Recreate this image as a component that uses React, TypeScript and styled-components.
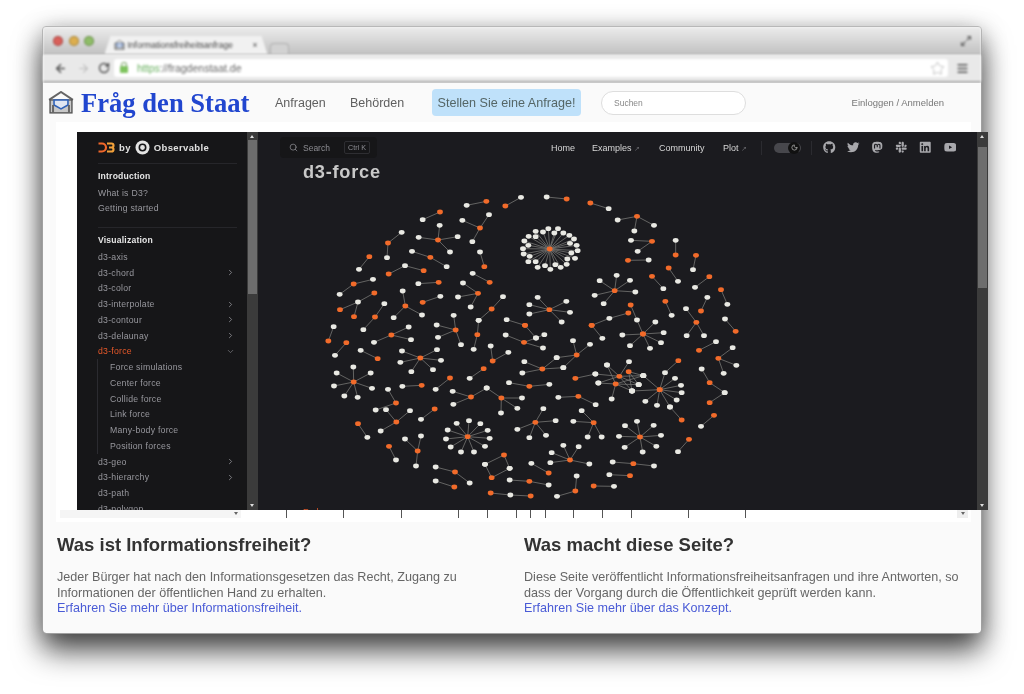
import React from "react";
import styled, {createGlobalStyle} from "styled-components";
import {ArrowLeft, ArrowRight, ChevronDown, ChevronRight, Maximize2, Menu, Moon, RotateCw, Search, Star} from "lucide-react";
import {FaGithub, FaLinkedin, FaMastodon, FaSlack, FaTwitter, FaYoutube} from "react-icons/fa";

const GlobalStyle = createGlobalStyle`
  html {
    background: #fff;
  }
  body {
    margin: 0;
    font-family: "Liberation Sans", Arial, sans-serif;
  }
  #root {
    height: 694px;
    overflow: hidden;
    display: flow-root;
  }
`;

// node: [x, y] is a white one, [x, y, O] an orange one
const O = 1;
type Node = [number, number, number?];
type Star = Node[]; // first node is the hub, the rest link to it
type Section = {x: number; y: number; stars: Star[]};

// positions measured on 3x crops of the chart, x/y is where each crop starts
const sections: Section[] = [
    {x: 320, y: 180, stars: [
        [[499,64,O],[440,76]],
        [[556,78,O],[603,52]],
        [[360,96,O],[308,119]],
        [[480,144,O],[427,121],[507,104],[457,185]],
        [[354,180,O],[359,136],[296,172],[413,170],[390,216]],
        [[204,189,O],[245,157],[201,233]],
        [[148,230,O],[117,268]],
        [[331,232,O],[276,214],[380,260]],
        [[255,257],[206,282,O],[311,272,O]],
        [[493,260,O],[480,216]],
        [[509,307,O],[458,280]],
        [[356,307,O],[295,311]],
        [[474,340,O],[429,309],[414,351],[452,381]],
        [[308,367,O],[361,349]],
        [[101,312,O],[59,343],[159,298]],
        [[114,366],[163,339,O],[60,389,O],[102,410,O]],
        [[165,411,O],[193,371],[130,449]],
        [[256,378,O],[248,333],[221,413],[306,405]],
        [[515,387,O],[549,350],[476,421]],
        [[472,464,O],[476,421],[461,508]],
        [[407,450,O],[401,406],[350,435],[354,472],[423,494]],
        [[214,465,O],[266,441],[273,479],[162,487]],
        [[25,483,O],[41,440]],
        [[560,419],[615,436,O]],
        [[612,487,O],[557,465],[648,474],[669,504]],
        [[648,474],[615,436,O],[673,464]],
    ]},
    {x: 530, y: 180, stars: [
        [[59,207,O],[17,154],[55,146],[84,146],[39,156],[73,159],[100,159],[118,166],[17,170],[132,177],[120,190],[140,196],[143,212],[124,219],[112,237],[135,235],[76,254],[110,253],[45,257],[92,262],[61,268],[23,262],[17,245],[-4,169],[-17,183],[-5,196],[-21,206],[-19,222],[-1,229],[-5,245]],
        [[110,57,O],[50,51]],
        [[181,69,O],[236,86]],
        [[321,109,O],[263,120],[372,136],[313,153]],
        [[366,184,O],[303,181],[323,214]],
        [[437,225,O],[437,181]],
        [[294,241,O],[356,240]],
        [[498,226,O],[489,269]],
        [[416,264,O],[444,304]],
        [[366,289,O],[400,326]],
        [[538,290,O],[495,322]],
        [[573,329,O],[592,373]],
        [[254,332,O],[260,286],[209,302],[300,301],[194,346],[316,336],[221,371]],
        [[58,389,O],[23,352],[109,364],[120,397],[95,426],[-2,374],[-2,402]],
        [[406,364,O],[425,406]],
        [[513,393,O],[532,352]],
        [[499,427,O],[468,386],[470,467],[522,467]],
        [[617,454,O],[585,417]],
        [[321,420],[302,375,O],[339,462,O]],
        [[238,415],[295,399,O],[185,436,O]],
        [[185,436,O],[217,475]],
        [[339,462,O],[376,426],[277,465],[401,458],[393,488],[300,497],[360,505]],
    ]},
    {x: 320, y: 340, stars: [
        [[79,8,O],[45,46]],
        [[173,56,O],[122,31]],
        [[301,54,O],[246,33],[351,29],[241,67],[363,61],[274,95],[339,89]],
        [[518,63,O],[512,18],[565,37]],
        [[491,86,O],[449,115]],
        [[101,126,O],[100,81],[50,99],[152,99],[42,138],[156,145],[73,168],[113,172]],
        [[305,136,O],[247,139]],
        [[228,189,O],[204,148],[167,210]],
        [[390,114,O],[347,148]],
        [[453,171,O],[398,154],[400,193],[500,144]],
        [[544,174,O],[500,144],[606,174],[592,205],[543,219]],
        [[229,246,O],[198,209],[270,212],[182,273]],
        [[344,207,O],[303,238]],
        [[114,251,O],[142,292]],
        [[443,290,O],[447,242],[410,250],[481,251],[383,270],[503,271],[378,297],[509,295],[392,321],[495,319],[423,336],[462,336]],
        [[207,319,O],[228,360]],
        [[293,333,O],[255,297],[303,288],[288,378]],
        [[405,396,O],[347,381],[449,429]],
        [[403,441,O],[347,423]],
        [[552,345,O],[495,373],[569,385]],
        [[515,413,O],[495,373],[569,385]],
        [[571,465],[512,459,O],[632,468,O]],
        [[628,424,O],[569,420],[686,435]],
        [[628,139,O],[567,128],[688,133]],
        [[686,399,O],[634,370]],
    ]},
    {x: 530, y: 340, stars: [
        [[140,45,O],[129,2],[180,13],[80,53],[100,83]],
        [[37,87,O],[80,53],[100,83],[-23,99],[-17,65]],
        [[507,31,O],[558,5]],
        [[565,55,O],[608,23],[619,76],[581,100]],
        [[405,98],[445,62,O],[389,149,O]],
        [[389,149,O],[435,115],[453,136],[455,158],[440,180],[420,201],[381,196],[346,184],[306,153],[340,107]],
        [[455,240,O],[420,201]],
        [[268,109,O],[231,75],[297,65],[340,107],[205,129],[326,134],[306,153],[196,102]],
        [[296,95,O],[340,107],[326,134],[306,153]],
        [[257,132,O],[340,107],[205,129],[231,75],[306,153],[245,177],[326,134]],
        [[136,115,O],[196,102]],
        [[145,169,O],[85,172],[197,194]],
        [[539,128,O],[515,87],[584,158]],
        [[539,188,O],[584,158]],
        [[552,226,O],[513,259]],
        [[477,298,O],[444,335]],
        [[191,248,O],[155,212],[130,244],[173,291],[215,291]],
        [[16,247,O],[40,206],[77,242],[-2,293],[48,286],[-38,268]],
        [[330,291,O],[321,244],[285,257],[371,256],[267,289],[393,286],[284,322],[379,319],[338,336]],
        [[120,360,O],[100,316],[146,320],[65,338],[61,368],[178,372]],
        [[310,371,O],[248,366],[372,378]],
        [[300,407,O],[238,404]],
        [[191,438,O],[252,439]],
        [[136,453,O],[140,408],[81,469]],
    ]},
];

const ForceGraph = () => {
    const links: React.ReactNode[] = [];
    const nodes: React.ReactNode[] = [];
    sections.forEach((section, s) => {
        const px = (n: Node) => n[0] / 3 + section.x;
        const py = (n: Node) => n[1] / 3 + section.y;
        section.stars.forEach((star, i) => {
            const hub = star[0];
            star.slice(1).forEach((leaf, j) => {
                links.push(<line key={`${s}-${i}-${j}`} x1={px(hub)} y1={py(hub)} x2={px(leaf)} y2={py(leaf)} stroke="#767674" strokeWidth={0.8}/>);
            });
            star.forEach((n, j) => {
                nodes.push(<ellipse key={`${s}-${i}-${j}`} cx={px(n)} cy={py(n)} rx={2.9} ry={2.4} fill={n[2] ? "#f26b2a" : "#e9e9e3"}/>);
            });
        });
    });
    return (
        <GraphSvg viewBox="258 183 719 327" width={719} height={327}>
            {links}
            {nodes}
            <text x={303} y={515} fill="#d8582a" fontSize={9} fontFamily="Liberation Sans">Fork</text>
        </GraphSvg>
    );
};

const HouseLogo = ({size}: {size: number}) => (
    <svg width={size} height={size * 0.88} viewBox="0 0 26 23">
        <path d="M1 9 13 1l12 8" fill="none" stroke="#666" strokeWidth="2"/>
        <rect x="2" y="9" width="22" height="13" fill="#c8c8c8" stroke="#555" strokeWidth="1.4"/>
        <path d="M6 9h14v5l-7 4-7-4z" fill="#dfe6f2" stroke="#2f62b8" strokeWidth="1.6"/>
        <path d="M5 22V14M21 22V14" stroke="#666" strokeWidth="2"/>
    </svg>
);

const D3Logo = () => (
    <svg width="17" height="11" viewBox="0 0 17 11">
        <path d="M0.5 1.5h3.5a4 4 0 0 1 0 8H0.5" fill="none" stroke="#f0672a" strokeWidth="2.2"/>
        <path d="M9 1.5h4.5a2 2 0 0 1 0 4H11M13.5 5.5a2 2 0 0 1 0 4H9" fill="none" stroke="#f3a13a" strokeWidth="2.2"/>
    </svg>
);

const ObservableLogo = () => (
    <svg width="15" height="15" viewBox="0 0 15 15">
        <circle cx="7.5" cy="7.5" r="7" fill="#e4e4e4"/>
        <circle cx="7.5" cy="7.5" r="3.2" fill="#e4e4e4" stroke="#161618" strokeWidth="1.6"/>
    </svg>
);

const WindowFrame = styled.div`
  position: relative;
  box-sizing: border-box;
  width: 938px;
  height: 606px;
  margin: 27px 0 0 43px;
  background: #fafafa;
  border-radius: 3px;
  outline: 1px solid #a0a0a0;
  box-shadow: 0 18px 30px rgba(0, 0, 0, 0.66), 0 4px 24px rgba(0, 0, 0, 0.34);
`;

const TitleBar = styled.div`
  display: flex;
  align-items: flex-end;
  height: 28px;
  padding: 0 9px 0 10px;
  box-sizing: border-box;
  background: linear-gradient(#ececec, #c2c2c2);
  border-bottom: 1px solid #a9a9a9;
  filter: blur(0.8px);
`;

const Light = styled.span<{$color: string}>`
  width: 10px;
  height: 10px;
  margin: 0 5.5px 8px 0;
  border-radius: 50%;
  background: ${p => p.$color};
  box-shadow: inset 0 0 0 1px rgba(0, 0, 0, 0.25);
  flex: none;
`;

const Tab = styled.div`
  display: flex;
  align-items: center;
  gap: 3px;
  box-sizing: border-box;
  width: 163px;
  height: 18px;
  margin-left: 5px;
  padding: 0 10px 0 9px;
  background: #f1f1f1;
  clip-path: polygon(6px 0, calc(100% - 6px) 0, 100% 100%, 0 100%);
  color: #444;
  font-size: 8.5px;
  white-space: nowrap;
  overflow: hidden;
`;

const TabTitle = styled.span`
  flex: 1;
  overflow: hidden;
`;

const NewTab = styled.div`
  width: 17px;
  height: 10px;
  margin-left: 2px;
  border: 1px solid #b0b0b0;
  border-bottom: none;
  border-radius: 4px 4px 0 0;
  background: #d2d2d2;
`;

const Expand = styled.div`
  margin: 0 0 7px auto;
  color: #666;
  display: flex;
`;

const Toolbar = styled.div`
  display: flex;
  align-items: center;
  height: 28px;
  padding: 0 8px;
  box-sizing: border-box;
  background: #e9e9e9;
  border-bottom: 2px solid #a8a8a8;
  filter: blur(0.8px);
`;

const ToolButton = styled.span<{$faded?: boolean; $width: number}>`
  display: flex;
  justify-content: center;
  width: ${p => p.$width}px;
  color: ${p => (p.$faded ? "#bdbdbd" : "#555")};
`;

const UrlBar = styled.div`
  display: flex;
  align-items: center;
  flex: 1;
  height: 18px;
  margin: 0 3px 0 2px;
  padding: 0 3px 0 6px;
  background: #fff;
  border-radius: 3px;
  font-size: 10.5px;
  color: #666;
`;

const LockIcon = styled.span`
  position: relative;
  width: 8px;
  height: 7px;
  margin: 3px 9px 0 0;
  border-radius: 1px;
  background: #7fc45f;
  &::before {
    content: "";
    position: absolute;
    left: 1px;
    top: -4px;
    width: 4px;
    height: 4px;
    border: 1px solid #7fa86a;
    border-bottom: none;
    border-radius: 3px 3px 0 0;
  }
`;

const Https = styled.span`
  color: #69b060;
`;

const UrlStar = styled.span`
  display: flex;
  margin-left: auto;
  color: #bbb;
`;

const SiteHeader = styled.header`
  display: flex;
  align-items: center;
  height: 39px;
  padding: 0 37px 0 5px;
  box-sizing: border-box;
  background: #fafafa;
  filter: blur(0.7px);
`;

const Brand = styled.div`
  width: 33px;
  display: flex;
`;

const BrandName = styled.div`
  width: 194px;
  color: #2146cf;
  font-family: "Liberation Serif", serif;
  font-weight: bold;
  font-size: 26.6px;
  line-height: 30px;
  white-space: nowrap;
`;

const NavLink = styled.span`
  width: 75px;
  color: #5f5f5f;
  font-size: 12.5px;
`;

const RequestButton = styled.div`
  display: flex;
  align-items: center;
  justify-content: center;
  width: 149px;
  height: 27px;
  margin: 0 20px 0 7px;
  background: #bfe1fa;
  border-radius: 4px;
  color: #566;
  font-size: 12.6px;
  white-space: nowrap;
`;

const SearchInput = styled.div`
  display: flex;
  align-items: center;
  box-sizing: border-box;
  width: 145px;
  height: 24px;
  padding-left: 12px;
  border: 1px solid #dedede;
  border-radius: 12px;
  background: #fff;
  color: #888;
  font-size: 8.5px;
`;

const LoginLink = styled.span`
  margin-left: auto;
  color: #777;
  font-size: 9.5px;
  white-space: nowrap;
`;

const ContentFrame = styled.div`
  position: relative;
  box-sizing: border-box;
  height: 400px;
  margin: 0 10px 0 13px;
  padding-top: 388px;
  background: #fff;
`;

const Embed = styled.div`
  position: absolute;
  left: 21px;
  top: 10px;
  display: flex;
  width: 911px;
  height: 378px;
  background: #1b1b1f;
  overflow: hidden;
  filter: blur(0.35px);
  color: #a0a0a6;
`;

const Sidebar = styled.nav`
  flex: none;
  box-sizing: border-box;
  width: 170px;
  padding: 0 10px 0 21px;
  background: #161618;
  overflow: hidden;
`;

const LogoRow = styled.div`
  display: flex;
  align-items: center;
  gap: 4px;
  height: 31px;
  color: #e0e0e0;
  font-size: 9.5px;
  font-weight: bold;
  letter-spacing: 0.35px;
  border-bottom: 1px solid #26262a;
`;

const SideGroup = styled.div<{$last?: boolean}>`
  padding: 5px 0 ${p => (p.$last ? 0 : 11)}px;
  border-bottom: ${p => (p.$last ? "none" : "1px solid #26262a")};
`;

const SideHeading = styled.div`
  height: 15.75px;
  line-height: 15.75px;
  color: #e6e6e6;
  font-size: 8.6px;
  font-weight: bold;
  letter-spacing: 0.2px;
`;

const SideItem = styled.div<{$active?: boolean; $nested?: boolean}>`
  display: flex;
  align-items: center;
  justify-content: space-between;
  height: 15.75px;
  padding-left: ${p => (p.$nested ? 12 : 0)}px;
  padding-right: 2px;
  margin-left: ${p => (p.$nested ? -1 : 0)}px;
  border-left: ${p => (p.$nested ? "1px solid #2b2b30" : "none")};
  color: ${p => (p.$active ? "#e8592a" : "#98989e")};
  font-size: 8.7px;
  letter-spacing: 0.25px;
  white-space: nowrap;
`;

const ScrollTrack = styled.div<{$thumbTop: number; $thumbHeight: number}>`
  position: relative;
  flex: none;
  width: 11px;
  background: #3b3b3b;
  &::before {
    content: "";
    position: absolute;
    left: 1px;
    right: 1px;
    top: ${p => p.$thumbTop}px;
    height: ${p => p.$thumbHeight}px;
    background: #6d6d6d;
  }
`;

const ScrollArrow = styled.span<{$down?: boolean}>`
  position: absolute;
  left: 3px;
  ${p => (p.$down ? "bottom: 3px;" : "top: 3px;")}
  border-left: 2.5px solid transparent;
  border-right: 2.5px solid transparent;
  ${p => (p.$down ? "border-top" : "border-bottom")}: 3px solid #ddd;
`;

const Main = styled.main`
  display: flex;
  flex-direction: column;
  width: 719px;
  flex: none;
  overflow: hidden;
`;

const TopBar = styled.div`
  display: flex;
  align-items: center;
  height: 31px;
  padding: 0 21px 0 22px;
  flex: none;
`;

const SearchBox = styled.div`
  display: flex;
  align-items: center;
  gap: 5px;
  box-sizing: border-box;
  width: 97px;
  height: 21px;
  padding: 0 7px 0 9px;
  background: #161618;
  border-radius: 4px;
  font-size: 8.5px;
  color: #8c8c92;
`;

const KeyHint = styled.span`
  margin-left: auto;
  padding: 1px 3px;
  border: 1px solid #2e2e32;
  border-radius: 2px;
  font-size: 7.2px;
`;

const TopLink = styled.span<{$width: number}>`
  width: ${p => p.$width}px;
  color: #d6d6d6;
  font-size: 9px;
  white-space: nowrap;
`;

const Outward = styled.span`
  margin-left: 2px;
  color: #66666a;
  font-size: 7px;
`;

const TopLinks = styled.div`
  display: flex;
  align-items: center;
  margin-left: auto;
`;

const Rule = styled.span`
  width: 1px;
  height: 14px;
  background: #2b2b30;
`;

const ThemeSwitch = styled.span`
  position: relative;
  width: 27px;
  height: 10px;
  margin: 0 10px 0 12px;
  border-radius: 5px;
  background: #47474c;
`;

const SwitchThumb = styled.span`
  position: absolute;
  right: 1px;
  top: -1px;
  display: flex;
  align-items: center;
  justify-content: center;
  width: 12px;
  height: 12px;
  border-radius: 50%;
  background: #111;
  color: #ddd;
`;

const SocialIcons = styled.div`
  display: flex;
  align-items: center;
  gap: 11.6px;
  margin-left: 11px;
  color: #a8a8ac;
`;

const PageTitle = styled.h1`
  flex: none;
  height: 20px;
  margin: 0;
  padding-left: 45px;
  color: #c9c9c9;
  font-size: 18.2px;
  line-height: 18px;
  font-weight: bold;
  letter-spacing: 0.75px;
`;

const GraphSvg = styled.svg`
  display: block;
  flex: none;
`;

const TickRow = styled.div`
  display: flex;
  height: 8px;
  padding-right: 3px;
`;

const SelectBar = styled.div`
  position: relative;
  width: 181px;
  margin: 0 45px 0 4px;
  background: #f5f5f5;
`;

const Tick = styled.span<{$width: number}>`
  width: ${p => p.$width}px;
  box-sizing: border-box;
  border-left: 1px solid #555;
  flex: none;
`;

const RowArrow = styled.span`
  margin-left: auto;
  width: 11px;
  height: 8px;
  background: #eee;
  position: relative;
`;

const ArrowMark = styled.span`
  position: absolute;
  right: 3px;
  top: 2px;
  border-left: 2.5px solid transparent;
  border-right: 2.5px solid transparent;
  border-top: 3px solid #666;
`;

const Columns = styled.section`
  display: grid;
  grid-template-columns: 467px 1fr;
  padding: 12px 14px 0;
  filter: blur(0.6px);
`;

const ColumnTitle = styled.h2`
  margin: 0 0 14px;
  color: #333;
  font-size: 18.5px;
  line-height: 22px;
  font-weight: bold;
  white-space: nowrap;
`;

const ColumnText = styled.p`
  margin: 0;
  color: #666;
  font-size: 12.6px;
  line-height: 15.5px;
  white-space: nowrap;
`;

const ColumnLink = styled.span`
  color: #4a5bd6;
`;

const ExternalTopLink = ({label, width}: {label: string; width: number}) => (
    <TopLink $width={width}>{label}<Outward>↗</Outward></TopLink>
);

const tickWidths = [57, 58, 57, 29, 29, 14, 15, 28, 29, 29, 57, 57, 1];

const App = () => {
    return (
        <>
            <GlobalStyle/>
            <WindowFrame>
                <TitleBar>
                    <Light $color="#d9605a"/>
                    <Light $color="#dcae4e"/>
                    <Light $color="#8fbd68"/>
                    <Tab>
                        <HouseLogo size={11}/>
                        <TabTitle>Informationsfreiheitsanfrage</TabTitle>
                        <span>×</span>
                    </Tab>
                    <NewTab/>
                    <Expand><Maximize2 size={12} strokeWidth={2.4}/></Expand>
                </TitleBar>
                <Toolbar>
                    <ToolButton $width={19}><ArrowLeft size={13} strokeWidth={3}/></ToolButton>
                    <ToolButton $width={26} $faded><ArrowRight size={13} strokeWidth={2}/></ToolButton>
                    <ToolButton $width={16}><RotateCw size={12} strokeWidth={3}/></ToolButton>
                    <UrlBar>
                        <LockIcon/>
                        <Https>https</Https>://fragdenstaat.de
                        <UrlStar><Star size={15} strokeWidth={1.4}/></UrlStar>
                    </UrlBar>
                    <ToolButton $width={22}><Menu size={13} strokeWidth={3}/></ToolButton>
                </Toolbar>
                <SiteHeader>
                    <Brand><HouseLogo size={26}/></Brand>
                    <BrandName>Fråg den Staat</BrandName>
                    <NavLink>Anfragen</NavLink>
                    <NavLink>Behörden</NavLink>
                    <RequestButton>Stellen Sie eine Anfrage!</RequestButton>
                    <SearchInput>Suchen</SearchInput>
                    <LoginLink>Einloggen / Anmelden</LoginLink>
                </SiteHeader>
                <ContentFrame>
                    <Embed>
                        <Sidebar>
                            <LogoRow>
                                <D3Logo/>
                                by
                                <ObservableLogo/>
                                Observable
                            </LogoRow>
                            <SideGroup>
                                <SideHeading>Introduction</SideHeading>
                                <SideItem>What is D3?</SideItem>
                                <SideItem>Getting started</SideItem>
                            </SideGroup>
                            <SideGroup $last>
                                <SideHeading>Visualization</SideHeading>
                                <SideItem>d3-axis</SideItem>
                                <SideItem>d3-chord<ChevronRight size={9}/></SideItem>
                                <SideItem>d3-color</SideItem>
                                <SideItem>d3-interpolate<ChevronRight size={9}/></SideItem>
                                <SideItem>d3-contour<ChevronRight size={9}/></SideItem>
                                <SideItem>d3-delaunay<ChevronRight size={9}/></SideItem>
                                <SideItem $active>d3-force<ChevronDown size={9} color="#77777c"/></SideItem>
                                <SideItem $nested>Force simulations</SideItem>
                                <SideItem $nested>Center force</SideItem>
                                <SideItem $nested>Collide force</SideItem>
                                <SideItem $nested>Link force</SideItem>
                                <SideItem $nested>Many-body force</SideItem>
                                <SideItem $nested>Position forces</SideItem>
                                <SideItem>d3-geo<ChevronRight size={9}/></SideItem>
                                <SideItem>d3-hierarchy<ChevronRight size={9}/></SideItem>
                                <SideItem>d3-path</SideItem>
                                <SideItem>d3-polygon</SideItem>
                            </SideGroup>
                        </Sidebar>
                        <ScrollTrack $thumbTop={8} $thumbHeight={154}>
                            <ScrollArrow/>
                            <ScrollArrow $down/>
                        </ScrollTrack>
                        <Main>
                            <TopBar>
                                <SearchBox>
                                    <Search size={9}/>
                                    Search
                                    <KeyHint>Ctrl K</KeyHint>
                                </SearchBox>
                                <TopLinks>
                                    <TopLink $width={41}>Home</TopLink>
                                    <ExternalTopLink label="Examples" width={67}/>
                                    <TopLink $width={64}>Community</TopLink>
                                    <ExternalTopLink label="Plot" width={38}/>
                                    <Rule/>
                                    <ThemeSwitch><SwitchThumb><Moon size={7}/></SwitchThumb></ThemeSwitch>
                                    <Rule/>
                                    <SocialIcons>
                                        <FaGithub size={12.5}/>
                                        <FaTwitter size={12.5}/>
                                        <FaMastodon size={12.5}/>
                                        <FaSlack size={12.5}/>
                                        <FaLinkedin size={12.5}/>
                                        <FaYoutube size={12.5}/>
                                    </SocialIcons>
                                </TopLinks>
                            </TopBar>
                            <PageTitle>d3-force</PageTitle>
                            <ForceGraph/>
                        </Main>
                        <ScrollTrack $thumbTop={15} $thumbHeight={141}>
                            <ScrollArrow/>
                            <ScrollArrow $down/>
                        </ScrollTrack>
                    </Embed>
                    <TickRow>
                        <SelectBar><ArrowMark/></SelectBar>
                        {tickWidths.map((width, i) => <Tick key={i} $width={width}/>)}
                        <RowArrow><ArrowMark/></RowArrow>
                    </TickRow>
                </ContentFrame>
                <Columns>
                    <div>
                        <ColumnTitle>Was ist Informationsfreiheit?</ColumnTitle>
                        <ColumnText>
                            Jeder Bürger hat nach den Informationsgesetzen das Recht, Zugang zu<br/>
                            Informationen der öffentlichen Hand zu erhalten.<br/>
                            <ColumnLink>Erfahren Sie mehr über Informationsfreiheit.</ColumnLink>
                        </ColumnText>
                    </div>
                    <div>
                        <ColumnTitle>Was macht diese Seite?</ColumnTitle>
                        <ColumnText>
                            Diese Seite veröffentlicht Informationsfreiheitsanfragen und ihre Antworten, so<br/>
                            dass der Vorgang durch die Öffentlichkeit geprüft werden kann.<br/>
                            <ColumnLink>Erfahren Sie mehr über das Konzept.</ColumnLink>
                        </ColumnText>
                    </div>
                </Columns>
            </WindowFrame>
        </>
    );
};

export default App;
